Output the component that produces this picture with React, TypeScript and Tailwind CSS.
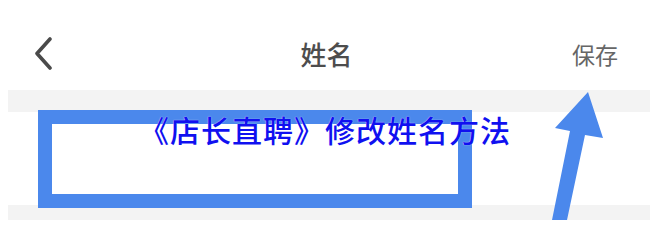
import React from 'react';

const cjk = { fontFamily: '"Noto Sans CJK SC", "Noto Sans", sans-serif' };

export default function App() {
  return (
    <div className="relative w-[650px] h-[220px] overflow-hidden bg-white" style={cjk}>
      {/* header */}
      <div className="flex items-center justify-between h-[90px] pt-[18px] pl-[33px] pr-[32px]">
        <svg width="22" height="34" viewBox="0 0 22 34" className="shrink-0">
          <path d="M17 2 L4 16.5 L17 31" fill="none" stroke="#4a4a4a" strokeWidth="3.6" strokeLinecap="round" strokeLinejoin="round" />
        </svg>
        <span className="text-[26px] leading-none font-medium text-[#4d4d4d] ml-[26px]">姓名</span>
        <span className="text-[23px] leading-none text-[#666666]">保存</span>
      </div>

      {/* body */}
      <div className="ml-2 h-[22px] bg-[#f3f3f3]" />
      <div className="h-[93px] bg-white" />
      <div className="ml-2 h-[15px] bg-[#f3f3f3]" />

      {/* annotation box */}
      <div className="absolute left-[38px] top-[110px] w-[434px] h-[98px] border-[14px] border-[#4b88ec]" />

      {/* annotation arrow */}
      <svg className="absolute left-[540px] top-[85px]" width="80" height="135" viewBox="0 0 80 135">
        <polygon points="48,7 63,53 45,50 27,135 12,135 30,46 15,43" fill="#4b88ec" />
      </svg>

      {/* caption */}
      <div
        className="absolute left-[139px] top-[114px] text-[30px] leading-none font-medium text-[#1010f0] whitespace-nowrap tracking-[1px]"
        style={{ textShadow: '0 0 1px #ffffff' }}
      >
        《店长直聘》修改姓名方法
      </div>
    </div>
  );
}
